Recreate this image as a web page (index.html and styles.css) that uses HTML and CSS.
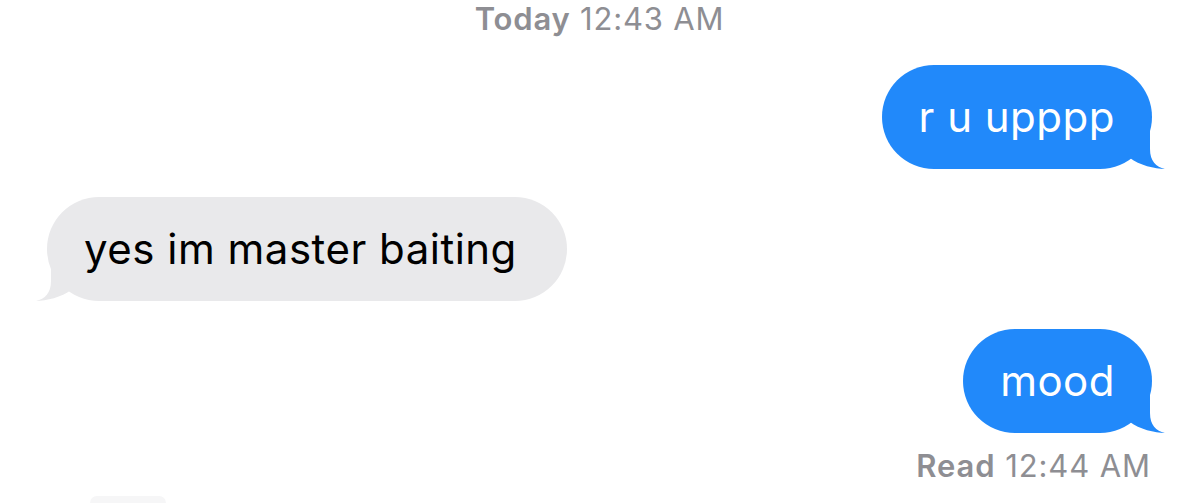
FILE: index.html
```html
<!DOCTYPE html>
<html lang="en">

<head>
    <meta charset="UTF-8">
    <meta name="viewport" content="width=device-width, initial-scale=1.0">
    <title>Messages</title>
    <link rel="stylesheet" href="styles.css">
</head>

<body>
    <div class="thread">
        <div class="stamp"><b>Today</b> 12:43 AM</div>

        <div class="row sent">
            <div class="bubble">
                r u upppp
                <svg class="tail" viewBox="0 0 42 50"><path d="M0 0H25V30C25 42 31 48 40 50C30 50 14 46 5 39L0 30Z"/></svg>
            </div>
        </div>

        <div class="row received">
            <div class="bubble">
                yes im master baiting
                <svg class="tail" viewBox="0 0 42 50"><path d="M0 0H25V30C25 42 31 48 40 50C30 50 14 46 5 39L0 30Z"/></svg>
            </div>
        </div>

        <div class="row sent group">
            <div class="bubble">
                mood
                <svg class="tail" viewBox="0 0 42 50"><path d="M0 0H25V30C25 42 31 48 40 50C30 50 14 46 5 39L0 30Z"/></svg>
            </div>
            <div class="receipt"><b>Read</b> 12:44 AM</div>
        </div>

        <div class="row received peek-row">
            <div class="peek"></div>
        </div>
    </div>
</body>

</html>
```

FILE: styles.css
```css
* {
    margin: 0;
    box-sizing: border-box;
    padding: 0;
}

body {
    background: #fff;
    font-family: Inter, "Liberation Sans", sans-serif;
    overflow: hidden;
}

.thread {
    display: flex;
    flex-direction: column;
    gap: 28px;
    padding: 1px 47px 0;
}

.stamp {
    text-align: center;
    font-size: 31px;
    line-height: 36px;
    letter-spacing: 0.8px;
    color: #8e8e93;
}

.stamp b,
.receipt b {
    font-weight: 600;
}

.row {
    display: flex;
}

.sent {
    justify-content: flex-end;
}

.received {
    justify-content: flex-start;
}

.group {
    flex-direction: column;
    align-items: flex-end;
    gap: 15px;
}

.bubble {
    position: relative;
    padding: 27px 37px;
    border-radius: 52px;
    font-size: 42px;
    line-height: 50px;
    letter-spacing: 0.5px;
    white-space: nowrap;
}

.sent .bubble {
    background: #2189fa;
    color: #fff;
}

.received .bubble {
    background: #e9e9eb;
    color: #000;
    padding-right: 50px;
}

.tail {
    position: absolute;
    bottom: 0;
    width: 42px;
    height: 50px;
}

.sent .tail {
    right: -15px;
    fill: #2189fa;
}

.received .tail {
    left: -13px;
    fill: #e9e9eb;
    transform: scaleX(-1);
}

.receipt {
    font-size: 31px;
    line-height: 36px;
    letter-spacing: 0.9px;
    color: #8e8e93;
    margin-right: 1px;
}

.peek-row {
    margin-top: -16px;
}

.peek {
    width: 76px;
    height: 7px;
    margin-left: 43px;
    border-radius: 7px 7px 0 0;
    background: #f6f6f7;
}
```
